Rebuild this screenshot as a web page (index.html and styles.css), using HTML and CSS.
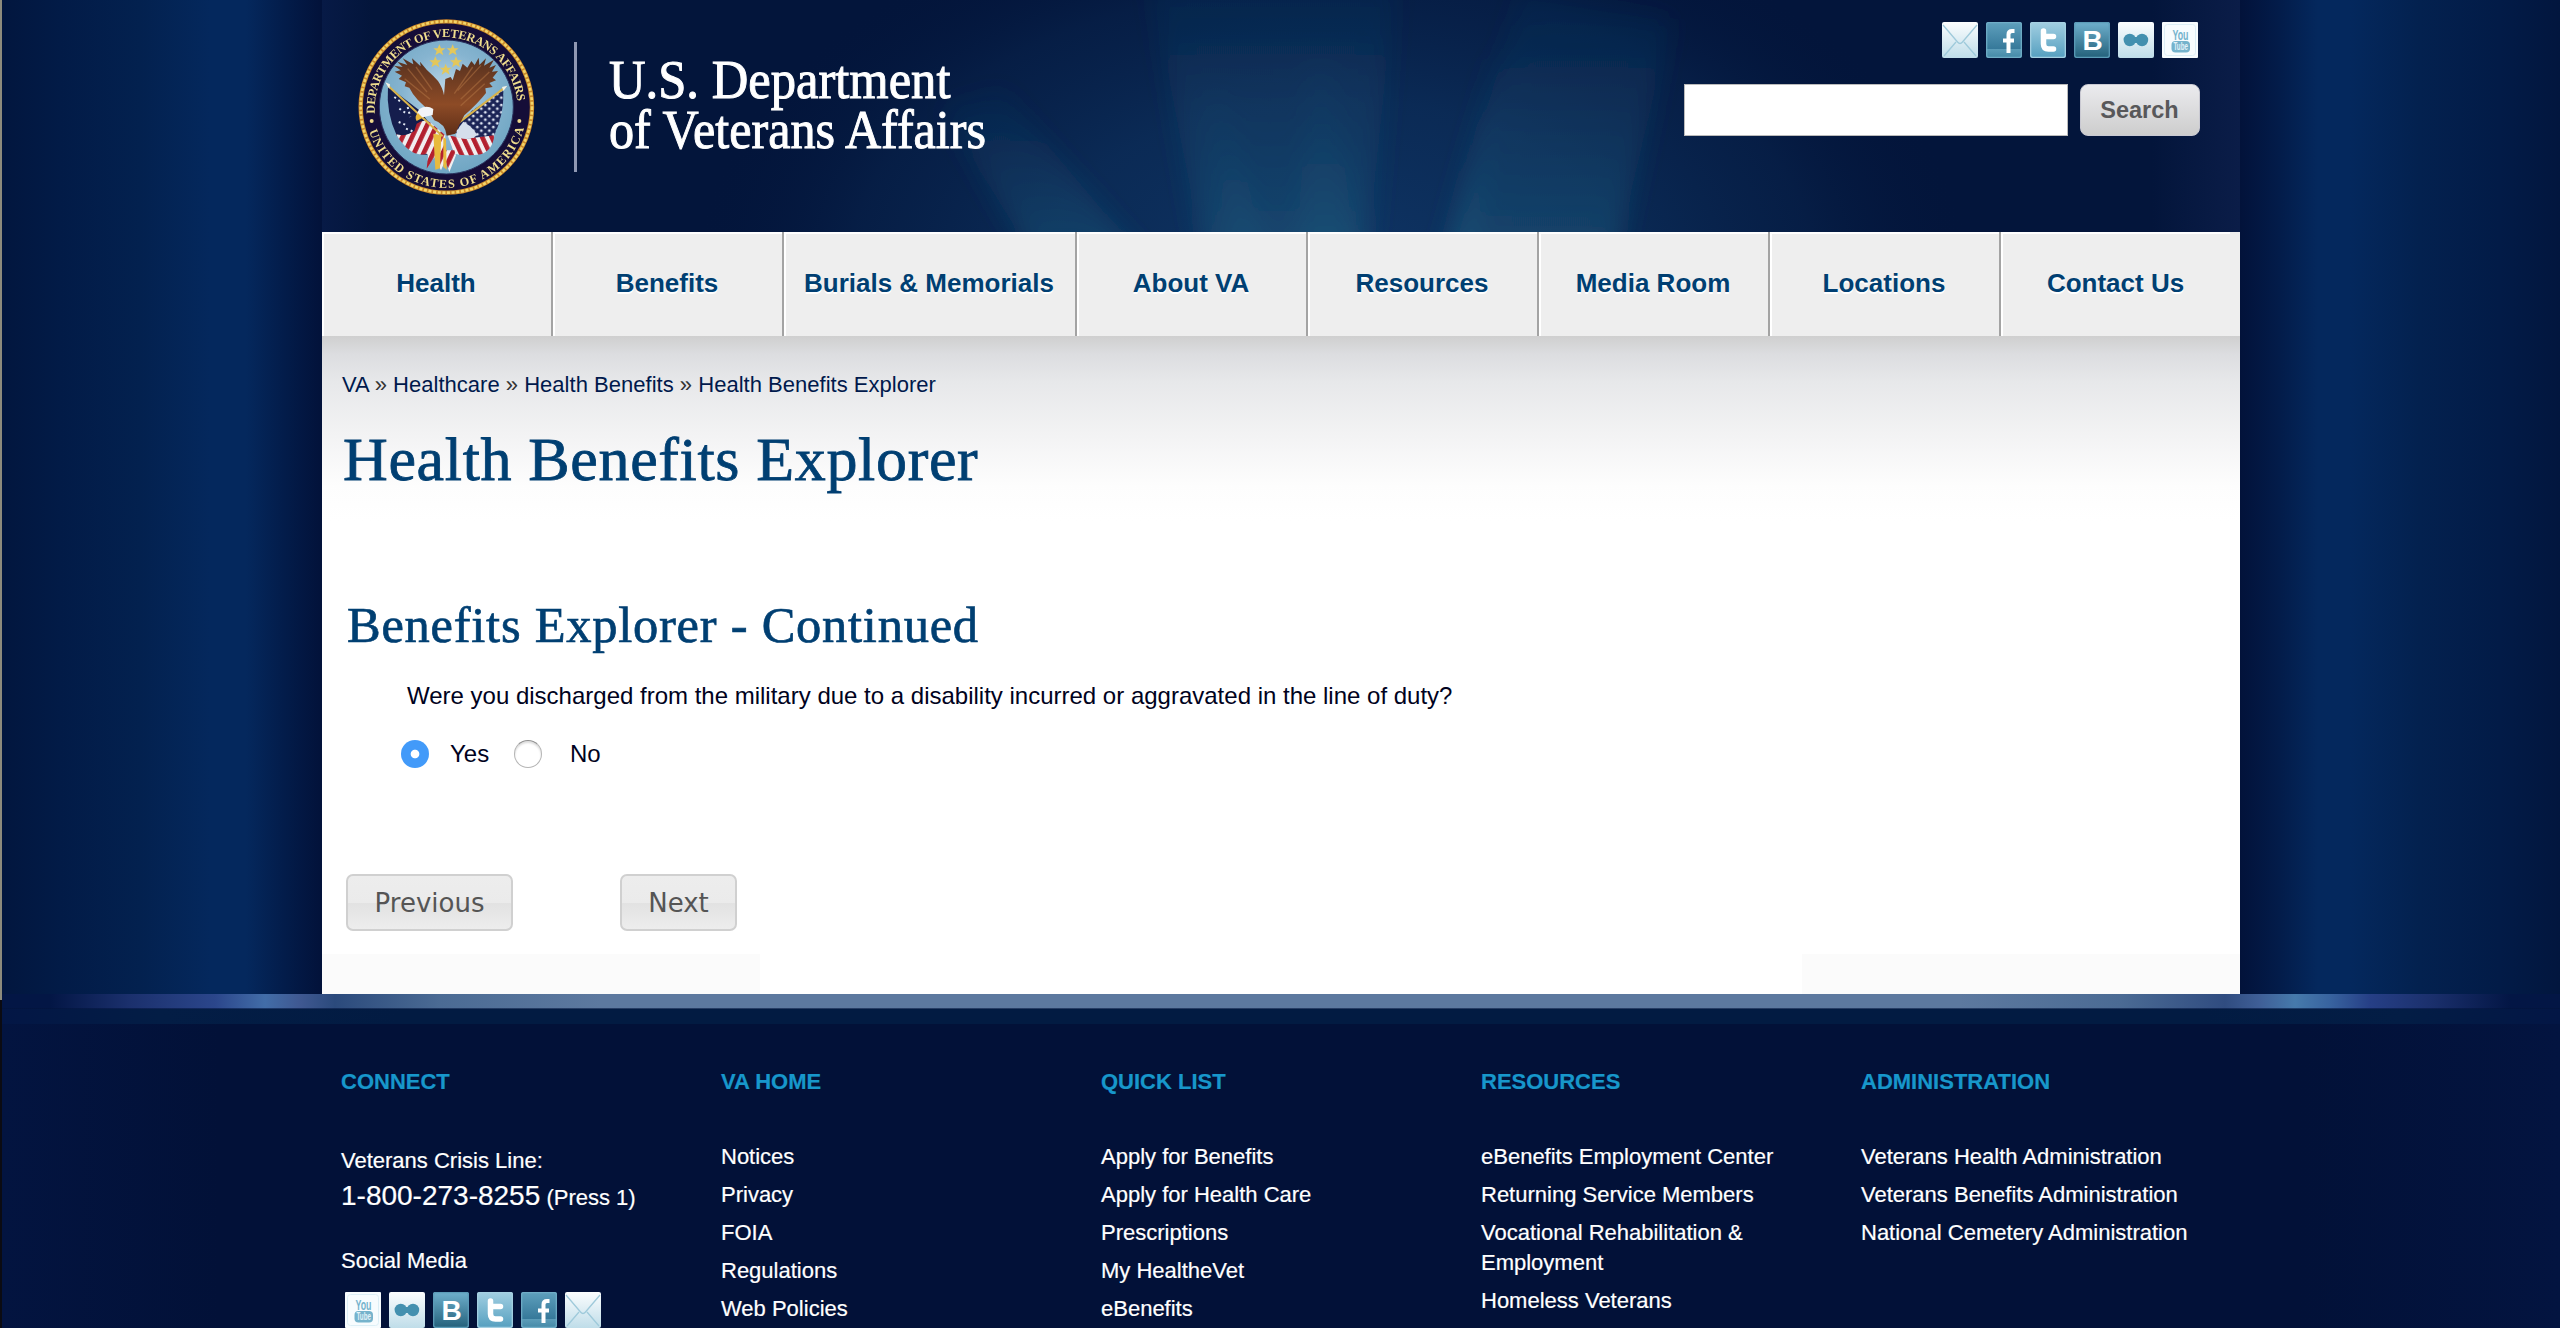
FILE: index.html
```html
<!DOCTYPE html>
<html lang="en">
<head>
<meta charset="utf-8">
<title>Health Benefits Explorer</title>
<link rel="stylesheet" href="styles.css">
</head>
<body>
<svg class="defs" width="0" height="0" aria-hidden="true">
  <defs>
    <linearGradient id="g-light" x1="0" y1="0" x2="0" y2="1"><stop offset="0" stop-color="#fbfdfe"/><stop offset="1" stop-color="#bfdde9"/></linearGradient>
    <linearGradient id="g-face" x1="0" y1="0" x2="0" y2="1"><stop offset="0" stop-color="#5fa0bd"/><stop offset=".74" stop-color="#36799a"/><stop offset=".76" stop-color="#5b9cb8"/><stop offset="1" stop-color="#4388a6"/></linearGradient>
    <linearGradient id="g-twit" x1="0" y1="0" x2="0" y2="1"><stop offset="0" stop-color="#a2cfe2"/><stop offset="1" stop-color="#559fbf"/></linearGradient>
    <linearGradient id="g-blog" x1="0" y1="0" x2="0" y2="1"><stop offset="0" stop-color="#6fb0cd"/><stop offset="1" stop-color="#23607a"/></linearGradient>
    <symbol id="i-mail" viewBox="0 0 36 36"><rect width="36" height="36" rx="2" fill="url(#g-light)"/><path d="M1 3l14.500 17q2.500 3 5 0L35 3M2 34l12-14M34 34L22 20" fill="none" stroke="#9fcadb" stroke-width="1.300"/></symbol>
    <symbol id="i-face" viewBox="0 0 36 36"><rect width="36" height="36" rx="2" fill="url(#g-face)"/><rect x=".7" y=".7" width="34.600" height="34.600" rx="2" fill="none" stroke="#70adc6" stroke-width="1.200"/><path d="M28.500 9h-2.500q-3.500 0-3.500 3.500V31M17 18.500h11" fill="none" stroke="#fff" stroke-width="4"/></symbol>
    <symbol id="i-twit" viewBox="0 0 36 36"><rect width="36" height="36" rx="2" fill="url(#g-twit)"/><rect x=".7" y=".7" width="34.600" height="34.600" rx="2" fill="none" stroke="#a5d0e2" stroke-width="1.200"/><path d="M13.500 9v13q0 5 5 5h5M13.500 14.500h10" fill="none" stroke="#fff" stroke-width="5.500" stroke-linecap="round"/></symbol>
    <symbol id="i-blog" viewBox="0 0 36 36"><rect width="36" height="36" rx="2" fill="url(#g-blog)"/><rect x=".7" y=".7" width="34.600" height="34.600" rx="2" fill="none" stroke="#5c9cb8" stroke-width="1.200"/><text x="8.500" y="28" class="icon-b">B</text></symbol>
    <symbol id="i-flickr" viewBox="0 0 36 36"><rect width="36" height="36" rx="2" fill="url(#g-light)"/><circle cx="11.800" cy="18" r="6.200" fill="#4390af"/><circle cx="24" cy="18" r="6.200" fill="#4390af"/><path d="M12 15h12v6H12z" fill="#4390af"/></symbol>
    <symbol id="i-tube" viewBox="0 0 36 36"><rect width="36" height="36" rx="1" fill="#f7fcfe"/><rect x="2.500" y="2.500" width="31" height="31" rx="3" fill="none" stroke="#dceff6"/><text x="10.500" y="17.500" class="icon-you" textLength="16" lengthAdjust="spacingAndGlyphs">You</text><rect x="9.500" y="19" width="18.500" height="11.500" rx="4" fill="#75b3cc"/><text x="11.500" y="28" class="icon-tube" textLength="14.500" lengthAdjust="spacingAndGlyphs">Tube</text></symbol>
  </defs>
</svg>

<div class="page">
  <div class="wrap">
    <header class="banner">
      <svg class="glow" viewBox="0 0 1918 232" preserveAspectRatio="none" aria-hidden="true">
        <defs>
          <radialGradient id="halo"><stop offset="0" stop-color="#0f3565"/><stop offset=".45" stop-color="#0c2e5a" stop-opacity=".85"/><stop offset=".75" stop-color="#0a2852" stop-opacity=".45"/><stop offset="1" stop-color="#03153b" stop-opacity="0"/></radialGradient>
          <linearGradient id="ray" x1="0" y1="1" x2="0" y2="0"><stop offset="0" stop-color="#1f5a7c" stop-opacity=".55"/><stop offset="1" stop-color="#123c64" stop-opacity=".15"/></linearGradient>
          <filter id="soft" x="-30%" y="-30%" width="160%" height="160%"><feGaussianBlur stdDeviation="12"/></filter>
        </defs>
        <ellipse cx="1010" cy="270" rx="640" ry="380" fill="url(#halo)"/>
        <g filter="url(#soft)" fill="url(#ray)">
          <path d="M885 270L825 -30L1075 -30L1043 270z"/>
          <path d="M915 270L880 90L905 90L945 270z"/>
          <path d="M975 270L985 60L1010 60L1035 270z"/>
          <path d="M1118 270L1200 -10L1350 20L1290 270z"/>
          <path d="M1120 270L1170 60L1180 60L1150 270z"/>
          <path d="M720 270L620 110L680 90L830 270z"/>
        </g>
      </svg>
      <svg class="seal" viewBox="50 50 540 540" aria-label="Department of Veterans Affairs seal">
        <defs>
          <path id="arc-top" d="M107 340A214 214 0 1 1 534 340"/>
          <path id="arc-bottom" d="M88 388A242 242 0 0 0 553 388"/>
          <radialGradient id="sky" cx=".5" cy=".42" r=".6"><stop offset="0" stop-color="#c3dcec"/><stop offset=".55" stop-color="#86b4d0"/><stop offset="1" stop-color="#6ea5c2"/></radialGradient>
          <linearGradient id="wing" x1="0" y1="0" x2="0" y2="1"><stop offset="0" stop-color="#55301f"/><stop offset=".6" stop-color="#8d4b26"/><stop offset="1" stop-color="#5d2d18"/></linearGradient>
          <pattern id="stars" width="24" height="22" patternUnits="userSpaceOnUse"><rect width="24" height="22" fill="#1b2456"/><circle cx="6" cy="6" r="4" fill="#dfe5f2"/><circle cx="18" cy="17" r="4" fill="#dfe5f2"/></pattern>
          <pattern id="stripes" width="26" height="26" patternUnits="userSpaceOnUse" patternTransform="rotate(25)"><rect width="26" height="26" fill="#f1eef0"/><rect width="14" height="26" fill="#b3202f"/></pattern>
          <pattern id="stripes2" width="26" height="26" patternUnits="userSpaceOnUse" patternTransform="rotate(-25)"><rect width="26" height="26" fill="#f1eef0"/><rect width="14" height="26" fill="#b3202f"/></pattern>
        </defs>
        <circle cx="321" cy="320" r="264" fill="#150d38"/>
        <circle cx="321" cy="320" r="257" fill="none" stroke="#c98a2b" stroke-width="13"/>
        <circle cx="321" cy="320" r="257" fill="none" stroke="#f2d469" stroke-width="8" stroke-dasharray="9 5"/>
        <circle cx="321" cy="320" r="201" fill="url(#sky)" stroke="#28305c" stroke-width="3"/>
        <text class="seal-text"><textPath href="#arc-top" textLength="664">DEPARTMENT OF VETERANS AFFAIRS</textPath></text>
        <text class="seal-text"><textPath href="#arc-bottom" textLength="624" startOffset="4">UNITED STATES OF AMERICA</textPath></text>
        <circle cx="97" cy="362" r="6" fill="#efd98c"/><circle cx="540" cy="362" r="6" fill="#efd98c"/>
        <g fill="#e3c75b">
          <path id="star" d="M300 132l5 12h13l-10 8 4 13-12-8-12 8 4-13-10-8h13z"/>
          <use href="#star" x="40"/><use href="#star" x="-12" y="36"/><use href="#star" x="50" y="36"/><use href="#star" x="19" y="58"/>
        </g>
        <path d="M146 258Q140 340 172 405L215 450Q245 470 285 460L295 400L240 330z" fill="#151d4d"/>
        <path d="M165 290l20 15M180 325l22 15M178 365l25 10M205 320l8 30M200 385l20 8" stroke="#dfe5f2" stroke-width="6" stroke-dasharray="6 9"/>
        <path d="M170 402Q200 410 225 392L232 370Q260 350 282 375L318 405L315 460Q280 480 262 460Q215 475 170 402z" fill="url(#stripes)"/>
        <path d="M492 270Q495 340 465 405L410 430L335 390L400 330z" fill="url(#stars)"/>
        <path d="M325 405L380 415L465 405Q460 450 425 462Q380 468 345 460z" fill="url(#stripes2)"/>
        <path d="M262 505L268 450L345 450L350 465L330 515L318 480L305 510L285 470z" fill="url(#stripes)"/>
        <path d="M146 256L310 408M496 262L335 385" stroke="#d9b34a" stroke-width="6"/>
        <path d="M138 246l14 6-2 14zM504 256l-16 4 4 12z" fill="#f4f2e6"/>
        <path d="M278 335Q228 300 210 262L196 258L200 246L178 236L188 226L166 214L184 210L164 196L190 200L174 184L204 194L190 174L222 192L218 174L244 198L242 184L262 208Q282 226 296 242Q310 262 314 285L318 236L334 230L340 240L350 206L362 212L370 190L384 202L396 182L406 194L418 172L420 194L440 174L434 196L464 178L450 202L470 194L458 214L476 212L460 232L470 240L450 248L460 260L438 264L440 278Q415 310 375 345Q360 372 348 400L322 406Q318 370 285 360L270 335z" fill="url(#wing)"/>
        <path d="M205 205l58 70M230 200l48 68M196 235l76 62M425 195l-70 76M400 200l-55 80M450 215l-86 82M436 250l-72 66" stroke="#b07242" stroke-width="4" opacity=".55"/>
        <path d="M282 326Q262 312 240 326Q228 342 238 354Q262 348 280 344z" fill="#f2f4f7"/>
        <path d="M236 338q-12 10-4 24l18-10z" fill="#e7b53a"/>
        <path d="M372 364Q400 380 414 404Q390 424 352 410Q344 398 372 364z" fill="#d5dfec"/>
        <path d="M282 400l24 4-4 100-14 4zM312 410l8 6 2 92-10-8z" fill="#e8ba3d"/>
      </svg>
      <div class="brand"><span class="brand-one">U.S. Department</span><span class="brand-two">of Veterans Affairs</span></div>
      <div class="tools">
        <div class="social">
          <svg><use href="#i-mail"/></svg><svg><use href="#i-face"/></svg><svg><use href="#i-twit"/></svg><svg><use href="#i-blog"/></svg><svg><use href="#i-flickr"/></svg><svg><use href="#i-tube"/></svg>
        </div>
        <form class="search"><input type="text" aria-label="Search"><button type="button">Search</button></form>
      </div>
    </header>
    <nav class="menu">
      <a>Health</a><a>Benefits</a><a class="wide">Burials &amp; Memorials</a><a>About VA</a><a>Resources</a><a>Media Room</a><a>Locations</a><a class="last">Contact Us</a>
    </nav>
    <main class="content">
      <div class="crumbs"><a>VA</a> » <a>Healthcare</a> » <a>Health Benefits</a> » <a>Health Benefits Explorer</a></div>
      <h1>Health Benefits Explorer</h1>
      <h2>Benefits Explorer - Continued</h2>
      <p class="question">Were you discharged from the military due to a disability incurred or aggravated in the line of duty?</p>
      <div class="answers"><span class="radio checked"></span><span class="yes">Yes</span><span class="radio"></span><span class="no">No</span></div>
      <div class="actions"><button type="button" class="prev">Previous</button><button type="button" class="next">Next</button></div>
      <div class="ends"><i></i><i></i></div>
    </main>
  </div>
  <footer class="footer">
    <div class="stripe"></div>
    <div class="band"></div>
    <div class="cols">
      <section>
        <h3>Connect</h3>
        <p class="crisis">Veterans Crisis Line:</p>
        <p class="phone"><span>1-800-273-8255</span> (Press 1)</p>
        <p class="media">Social Media</p>
        <div class="social">
          <svg><use href="#i-tube"/></svg><svg><use href="#i-flickr"/></svg><svg><use href="#i-blog"/></svg><svg><use href="#i-twit"/></svg><svg><use href="#i-face"/></svg><svg><use href="#i-mail"/></svg>
        </div>
      </section>
      <section><h3>VA Home</h3><ul><li>Notices</li><li>Privacy</li><li>FOIA</li><li>Regulations</li><li>Web Policies</li></ul></section>
      <section><h3>Quick List</h3><ul><li>Apply for Benefits</li><li>Apply for Health Care</li><li>Prescriptions</li><li>My HealtheVet</li><li>eBenefits</li></ul></section>
      <section><h3>Resources</h3><ul><li>eBenefits Employment Center</li><li>Returning Service Members</li><li>Vocational Rehabilitation &amp;<br>Employment</li><li>Homeless Veterans</li></ul></section>
      <section><h3>Administration</h3><ul><li>Veterans Health Administration</li><li>Veterans Benefits Administration</li><li>National Cemetery Administration</li></ul></section>
    </div>
  </footer>
  <div class="edge"></div>
</div>
</body>
</html>
```
FILE: styles.css
```css
* { box-sizing: border-box; }
body { margin: 0; font-family: "Liberation Sans", Arial, sans-serif; font-size: 22px; line-height: 30px; }
h1, h2, h3, p, ul { margin: 0; padding: 0; font-weight: normal; }
ul { list-style: none; }
.defs { position: absolute; }

.page {
  position: relative; height: 1328px; overflow: hidden;
  background: linear-gradient(90deg, #02163e 0, #021b47 60px, #03214f 140px, #04285d 210px, #04285d 246px, #031c4a 285px, #02123a 321px, #02123a 2240px, #031c4a 2280px, #04285d 2318px, #04285d 2350px, #03214f 2420px, #021b47 2500px, #02163e 2560px);
}
.edge { position: absolute; left: 0; top: 0; width: 2px; height: 1328px; background: linear-gradient(#8d8b7c 0, #8d8b7c 1000px, #0b0b12 1000px); }
.wrap { width: 1918px; margin-left: 322px; height: 994px; background: #fff; }

.banner { position: relative; height: 232px; display: flex; background: linear-gradient(90deg, #071a46 0, #03153b 50px, #03153b 1830px, #0b1d48 1918px); }
.glow { position: absolute; inset: 0; width: 100%; height: 100%; }
.seal { position: relative; flex: none; width: 180px; height: 180px; margin: 17px 0 0 34px; filter: blur(.5px); }
.seal-text { font: bold 37px "Liberation Serif", serif; fill: #eedc8d; }
.brand {
  position: relative; flex: none; width: 460px; height: 130px; margin: 42px 0 0 38px; padding: 13px 0 0 32px;
  border-left: 3px solid #8f98b3; color: #fff;
  font: 55px/50px "Liberation Serif", serif; white-space: nowrap; -webkit-text-stroke: 1px #fff;
}
.brand span { display: block; transform-origin: 0 0; width: max-content; }
.brand-one { transform: scaleX(.92); }
.brand-two { transform: scaleX(.912); }
.tools { position: relative; margin: 22px 40px 0 auto; display: flex; flex-direction: column; align-items: flex-end; gap: 26px; }
.social { display: flex; gap: 8px; }
.social svg { width: 36px; height: 36px; display: block; }
.tools .social { margin-right: 2px; }
.icon-b { font: bold 28px "Liberation Sans", sans-serif; fill: #fff; }
.icon-you { font: bold 14px "Liberation Sans", sans-serif; fill: #75b3cc; }
.icon-tube { font: bold 10px "Liberation Sans", sans-serif; fill: #e3f2f8; }
.search { display: flex; gap: 12px; }
.search input { width: 384px; height: 52px; border: 1px solid #bbb; background: #fff; padding: 0; }
.search button {
  width: 120px; height: 52px; border: 1px solid #c9c9d2; border-radius: 8px; padding: 0 1px 0 0;
  background: linear-gradient(#ebebee, #cdcdcd); color: #58585a; font: bold 23.500px "Liberation Sans", Arial, sans-serif;
}

.menu { display: flex; height: 104px; background: linear-gradient(90deg, #fff 1908px, #eee 1908px) top / 100% 2px no-repeat #eee; }
.menu a {
  width: 231px; flex: none; border-right: 2px solid #a3a3a3; box-shadow: inset 2px 0 #fff; text-align: center;
  font-weight: bold; font-size: 26px; line-height: 102px; color: #003f72; text-shadow: 0 2px #fff; padding-right: 1px;
}
.menu .wide { width: 293px; }
.menu .last { border: 0; padding-right: 10px; width: 239px; }

.content { height: 658px; padding: 34px 0 0; background: linear-gradient(#cfcfcf 0, #dcdde0 18px, #e7e8ea 46px, #f3f3f4 100px, #fdfdfd 150px, #fff 185px); }
.crumbs { padding-left: 20px; color: #333; letter-spacing: .02px; }
.crumbs a { color: #00194c; }
h1 { margin: 24px 0 0 21px; font: 62px/70px "Liberation Serif", Georgia, serif; letter-spacing: .65px; color: #003f72; -webkit-text-stroke: .8px #003f72; }
h2 { margin: 101px 0 0 25px; font: 50.500px/60px "Liberation Serif", Georgia, serif; letter-spacing: .75px; color: #003f72; -webkit-text-stroke: .7px #003f72; }
.question { margin: 26px 0 0 85px; font-size: 24px; color: #000220; }
.answers { display: flex; align-items: center; height: 30px; margin: 28px 0 0 79px; font-size: 24px; color: #000220; }
.radio { width: 28px; height: 28px; border-radius: 50%; border: 1.500px solid #b5b5b5; border-top-color: #8f8f8f; box-shadow: inset 0 2px 2px #ddd; background: #fff; }
.radio.checked { border: 0; box-shadow: none; background: radial-gradient(circle, #fff 0 3.800px, #429af9 4.800px); }
.yes { width: 64px; padding-left: 21px; margin-right: 21px; }
.no { padding-left: 28px; }
.actions { display: flex; gap: 107px; margin: 105px 0 0 24px; }
.actions button {
  height: 57px; border: 2px solid #d0d0d0; border-radius: 7px; padding: 0; color: #555;
  background: linear-gradient(#ededed 0, #ebebeb 50%, #e2e2e2 52%, #ededed 100%); font: 26px "DejaVu Sans", Verdana, sans-serif;
}
.prev { width: 167px; }
.next { width: 117px; }
.ends { display: flex; justify-content: space-between; margin-top: 23px; }
.ends i { width: 438px; height: 40px; background: #fbfbfb; }

.footer { height: 334px; background: linear-gradient(90deg, #031440 0, #021138 220px, #021138 2300px, #031440 2560px); }
.stripe { height: 15px; background: linear-gradient(transparent 14px, rgba(2, 20, 60, .6) 14px), linear-gradient(90deg, #031645 0, #031645 50px, #1b306d 130px, #2b468b 215px, #426da8 265px, #3f5891 300px, #2b4a7c 335px, #4b6b94 440px, #5d799f 600px, #5d799f 1960px, #4b6b94 2120px, #304c80 2225px, #3f5f97 2260px, #467aac 2295px, #38639f 2330px, #263f86 2370px, #1b306d 2430px, #031645 2510px); }
.band { height: 15px; background: linear-gradient(90deg, #031645 0, #031d45 160px, #021b42 400px, #021b42 2200px, #031d45 2400px, #031645 2560px); }
.cols { display: grid; grid-template-columns: repeat(5, 380px); padding: 43px 0 0 341px; color: #fff; -webkit-text-stroke: .2px; }
h3 { font-size: 22px; font-weight: bold; text-transform: uppercase; color: #1797cb; margin-bottom: 45px; }
li { margin-bottom: 8px; white-space: nowrap; }
.crisis { padding-top: 4px; }
.phone { margin-top: 5px; }
.phone span { font-size: 28px; }
.media { margin-top: 33px; }
.cols .social { margin: 16px 0 0 4px; }
```
